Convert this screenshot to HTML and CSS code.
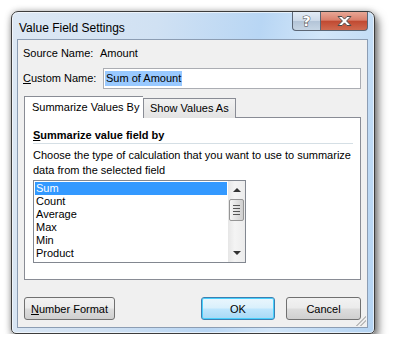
FILE: index.html
```html
<!DOCTYPE html>
<html lang="en">
<head>
    <meta charset="UTF-8">
    <meta name="viewport" content="width=device-width, initial-scale=1.0">
    <title>Value Field Settings</title>
    <link rel="stylesheet" href="styles.css">
</head>
<body>
    <div class="window">
        <div class="titlebar">
            <span class="title">Value Field Settings</span>
            <div class="caption-buttons">
                <div class="cap-btn help"><span class="help-glyph">?</span></div>
                <div class="cap-btn close">
                    <svg width="17" height="12" viewBox="0 0 17 12">
                        <path d="M2 1.5h4l2.5 2.6L11 1.5h4l-4.4 4.5L15 10.5h-4L8.5 7.9 6 10.5H2l4.4-4.5z" fill="#fff" stroke="#4a4a4a" stroke-width="1" stroke-linejoin="round"/>
                    </svg>
                </div>
            </div>
        </div>

        <div class="client">
            <div class="row">
                <span class="label">Source Name:</span>
                <span>Amount</span>
            </div>
            <div class="row row-input">
                <span class="label"><u>C</u>ustom Name:</span>
                <div class="textbox"><span class="selected">Sum of Amount</span></div>
            </div>

            <div class="tabs">
                <div class="tab active">Summarize Values By</div>
                <div class="tab">Show Values As</div>
            </div>
            <div class="panel">
                <div class="heading"><u>S</u>ummarize value field by</div>
                <p class="hint">Choose the type of calculation that you want to use to summarize<br>data from the selected field</p>
                <div class="listbox">
                    <ul class="items">
                        <li class="sel">Sum</li>
                        <li>Count</li>
                        <li>Average</li>
                        <li>Max</li>
                        <li>Min</li>
                        <li>Product</li>
                    </ul>
                    <div class="scrollbar">
                        <div class="arrow up"></div>
                        <div class="thumb"><span></span><span></span><span></span><span></span></div>
                        <div class="arrow down"></div>
                    </div>
                </div>
            </div>

            <div class="buttons">
                <button class="btn btn-format"><u>N</u>umber Format</button>
                <div class="spacer"></div>
                <button class="btn btn-ok">OK</button>
                <button class="btn btn-cancel">Cancel</button>
            </div>
            <div class="grip"></div>
        </div>
    </div>
</body>
</html>
```

FILE: styles.css
```css
body {
    margin: 0;
    padding: 11px 0 0 11px;
    background: #ffffff;
    font-family: "Liberation Sans", Arial, sans-serif;
    font-size: 11px;
    color: #000;
}

.window {
    width: 362px;
    height: 321px;
    border: 1px solid #3c3c3c;
    border-radius: 7px 7px 5px 5px;
    background: linear-gradient(100deg, #dde8f4 0%, #d0e1f3 35%, #b8d6f4 60%, #d2e6f9 75%, #b4d3f2 100%);
    box-shadow: 3px 5px 10px rgba(0, 0, 0, 0.55), 0 0 6px rgba(0, 0, 0, 0.25), inset 0 0 0 1px rgba(255, 255, 255, 0.6);
    display: flex;
    flex-direction: column;
}

.titlebar {
    height: 27px;
    display: flex;
    align-items: flex-start;
    position: relative;
}

.title {
    padding: 9px 0 0 7px;
    line-height: 14px;
    font-size: 12px;
    white-space: nowrap;
}

.caption-buttons {
    margin-left: auto;
    margin-right: 6px;
    display: flex;
}

.cap-btn {
    height: 18px;
    border: 1px solid #5b6675;
    border-top: none;
    display: flex;
    align-items: center;
    justify-content: center;
}

.help {
    width: 27px;
    border-right: none;
    border-radius: 0 0 0 4px;
    background: linear-gradient(#e2ebf5 0%, #ccd9e8 50%, #b3c4d7 51%, #c6d5e4 100%);
}

.help-glyph {
    font-family: "DejaVu Sans", sans-serif;
    font-weight: bold;
    font-size: 14px;
    color: #fff;
    -webkit-text-stroke: 1px #4a4a4a;
    paint-order: stroke fill;
    line-height: 14px;
}

.close {
    width: 46px;
    border-radius: 0 0 4px 0;
    background: linear-gradient(#e8a796 0%, #d9806c 45%, #c14a32 52%, #cf6a50 100%);
}

.client {
    flex: 1;
    margin: 0 6px 5px 5px;
    border: 1px solid #8c9db3;
    background: #f0f0f0;
    padding: 6px 6px 0 6px;
    display: flex;
    flex-direction: column;
    position: relative;
    white-space: nowrap;
}

.row {
    display: flex;
    align-items: center;
    height: 15px;
    line-height: 15px;
}

.label {
    width: 77px;
    margin-left: -1px;
    flex-shrink: 0;
}

.row-input {
    height: 21px;
    margin-top: 7px;
}

.row-input .label {
    width: 80px;
}

.textbox {
    flex: 1;
    height: 19px;
    border: 1px solid #abadb3;
    background: #fff;
    display: flex;
    align-items: center;
    padding-left: 1px;
}

.selected {
    background: #99c9ff;
    line-height: 15px;
    padding: 0 1px;
}

.tabs {
    display: flex;
    align-items: flex-end;
    margin-top: 7px;
    height: 22px;
    position: relative;
    z-index: 1;
}

.tab {
    height: 19px;
    line-height: 19px;
    padding: 0 6px;
    border: 1px solid #898c95;
    border-bottom: none;
    background: linear-gradient(#f2f2f2, #e3e3e3);
}

.tab.active {
    box-sizing: border-box;
    width: 119px;
    height: 22px;
    line-height: 21px;
    padding: 0 7px;
    background: #fff;
    border-right: none;
}

.panel {
    margin-top: -1px;
    height: 161px;
    border: 1px solid #898c95;
    background: #fff;
    padding: 0 7px 0 8px;
}

.heading {
    font-weight: bold;
    line-height: 15px;
    padding-top: 10px;
    border-bottom: 1px solid #d5dfe5;
}

.hint {
    margin: 4px 0 0;
    line-height: 15px;
}

.listbox {
    margin-top: 2px;
    width: 211px;
    height: 81px;
    border: 1px solid #828790;
    display: flex;
}

.items {
    list-style: none;
    margin: 0;
    padding: 1px;
    flex: 1;
}

.items li {
    height: 13px;
    line-height: 13px;
    padding-left: 1px;
}

.items li.sel {
    background: #3399ff;
    color: #fff;
}

.scrollbar {
    width: 17px;
    background: linear-gradient(90deg, #e6e6e6, #f4f4f4 40%, #ececec);
    display: flex;
    flex-direction: column;
    align-items: center;
}

.arrow {
    width: 0;
    height: 0;
    border-left: 4px solid transparent;
    border-right: 4px solid transparent;
}

.arrow.up {
    margin-top: 7px;
    border-bottom: 4px solid #333;
}

.arrow.down {
    margin-top: auto;
    margin-bottom: 7px;
    border-top: 4px solid #333;
}

.thumb {
    margin-top: 7px;
    width: 13px;
    height: 20px;
    border: 1px solid #959595;
    border-radius: 2px;
    background: linear-gradient(90deg, #f5f5f5, #e2e2e2 50%, #cfcfcf);
    display: flex;
    flex-direction: column;
    justify-content: center;
    align-items: center;
    gap: 2px;
}

.thumb span {
    width: 7px;
    height: 1px;
    background: #555;
}

.buttons {
    display: flex;
    margin-top: 17px;
    height: 23px;
}

.spacer {
    flex: 1;
}

.btn {
    font-family: inherit;
    font-size: 11px;
    height: 23px;
    padding: 0;
    border: 1px solid #707070;
    border-radius: 3px;
    background: linear-gradient(#f2f2f2 0%, #ebebeb 48%, #dddddd 52%, #cfcfcf 100%);
    color: #000;
    white-space: nowrap;
}

.btn-format {
    width: 91px;
}

.btn-ok {
    width: 74px;
    border-color: #3c7fb1;
    box-shadow: inset 0 0 0 1px #48d0fd;
    background: linear-gradient(#eaf6fd 0%, #d9f0fc 48%, #bee6fd 52%, #a7d9f5 100%);
}

.btn-cancel {
    width: 75px;
    margin-left: 11px;
}

.grip {
    position: absolute;
    right: 1px;
    bottom: 1px;
    width: 10px;
    height: 10px;
    background: linear-gradient(135deg, transparent 50%, #bdbdbd 50%, #bdbdbd 58%, transparent 58%, transparent 70%, #bdbdbd 70%, #bdbdbd 78%, transparent 78%);
}
```
